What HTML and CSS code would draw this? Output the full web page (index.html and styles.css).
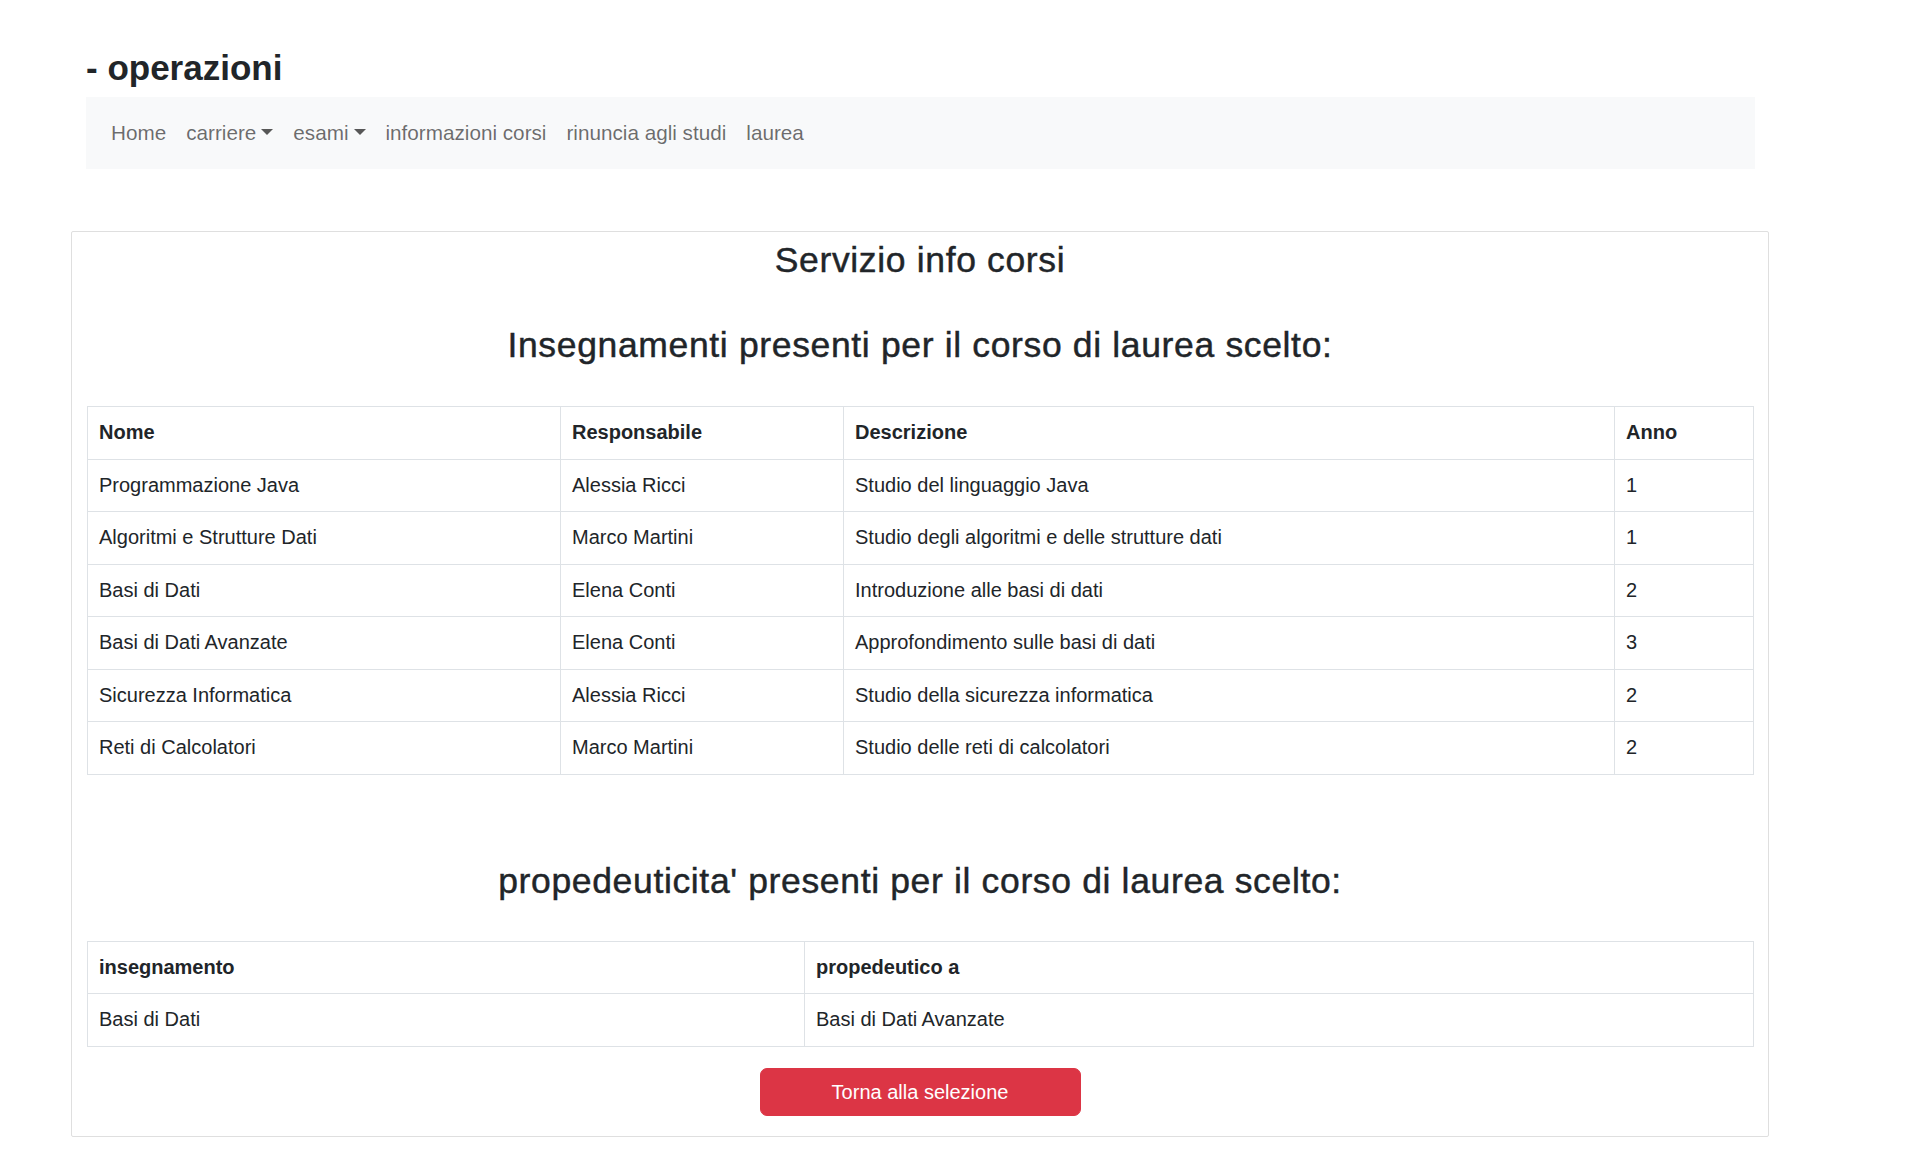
FILE: index.html
```html
<!DOCTYPE html>
<html lang="it">
<head>
<meta charset="utf-8">
<title>Servizio info corsi</title>
<link rel="stylesheet" href="styles.css">
</head>
<body>
<header class="top">
  <h3 class="page-title">- operazioni</h3>
  <nav class="navbar">
    <a class="nav-link" href="#">Home</a>
    <a class="nav-link" href="#">carriere<span class="caret"></span></a>
    <a class="nav-link" href="#">esami<span class="caret"></span></a>
    <a class="nav-link" href="#">informazioni corsi</a>
    <a class="nav-link" href="#">rinuncia agli studi</a>
    <a class="nav-link" href="#">laurea</a>
  </nav>
</header>

<main class="card">
  <h3 class="card-title">Servizio info corsi</h3>
  <h3 class="section-title">Insegnamenti presenti per il corso di laurea scelto:</h3>
  <table class="data-table courses">
    <colgroup>
      <col class="c-nome"><col class="c-resp"><col class="c-desc"><col class="c-anno">
    </colgroup>
    <thead>
      <tr><th>Nome</th><th>Responsabile</th><th>Descrizione</th><th>Anno</th></tr>
    </thead>
    <tbody>
      <tr><td>Programmazione Java</td><td>Alessia Ricci</td><td>Studio del linguaggio Java</td><td>1</td></tr>
      <tr><td>Algoritmi e Strutture Dati</td><td>Marco Martini</td><td>Studio degli algoritmi e delle strutture dati</td><td>1</td></tr>
      <tr><td>Basi di Dati</td><td>Elena Conti</td><td>Introduzione alle basi di dati</td><td>2</td></tr>
      <tr><td>Basi di Dati Avanzate</td><td>Elena Conti</td><td>Approfondimento sulle basi di dati</td><td>3</td></tr>
      <tr><td>Sicurezza Informatica</td><td>Alessia Ricci</td><td>Studio della sicurezza informatica</td><td>2</td></tr>
      <tr><td>Reti di Calcolatori</td><td>Marco Martini</td><td>Studio delle reti di calcolatori</td><td>2</td></tr>
    </tbody>
  </table>

  <h3 class="section-title spaced">propedeuticita' presenti per il corso di laurea scelto:</h3>
  <table class="data-table prereq">
    <colgroup>
      <col class="c-ins"><col class="c-prop">
    </colgroup>
    <thead>
      <tr><th>insegnamento</th><th>propedeutico a</th></tr>
    </thead>
    <tbody>
      <tr><td>Basi di Dati</td><td>Basi di Dati Avanzate</td></tr>
    </tbody>
  </table>

  <div class="actions">
    <button class="btn-danger" type="button">Torna alla selezione</button>
  </div>
</main>
</body>
</html>
```

FILE: styles.css
```css
* { box-sizing: border-box; }

html, body {
  margin: 0;
  padding: 0;
  background: #ffffff;
}

body {
  font-family: "Liberation Sans", Arial, sans-serif;
  font-size: 20px;
  line-height: 30px;
  color: #212529;
}

.top {
  width: 1669px;
  margin-left: 86px;
  padding-top: 47px;
}

.page-title {
  margin: 0 0 8px 0;
  font-size: 35px;
  line-height: 42px;
  font-weight: 700;
  color: #212529;
}

.navbar {
  display: flex;
  align-items: center;
  height: 72px;
  padding: 11px 15px;
  background: #f8f9fa;
}

.nav-link {
  display: block;
  padding: 10px 10px;
  font-size: 20.7px;
  color: rgba(0, 0, 0, 0.58);
  text-decoration: none;
  white-space: nowrap;
}

.caret {
  display: inline-block;
  width: 0;
  height: 0;
  margin-left: 5px;
  vertical-align: 5px;
  border-top: 6px solid rgba(0, 0, 0, 0.65);
  border-left: 6px solid transparent;
  border-right: 6px solid transparent;
}

.card {
  display: block;
  width: 1698px;
  margin: 62px 0 40px 71px;
  padding: 7px 15px 20px 15px;
  border: 1px solid #dfdfdf;
  border-radius: 2px;
  background: #fff;
}

.card-title,
.section-title {
  margin: 0;
  text-align: center;
  font-size: 35.5px;
  line-height: 42px;
  font-weight: 400;
  letter-spacing: 0.65px;
  -webkit-text-stroke: 0.45px #212529;
  color: #212529;
}

.section-title {
  margin-top: 43px;
  margin-bottom: 40px;
}

.section-title.spaced {
  margin-top: 85px;
  margin-bottom: 39px;
}

.data-table {
  width: 1666px;
  border-collapse: collapse;
  table-layout: fixed;
  border: 1px solid #dee2e6;
}

.data-table th,
.data-table td {
  padding: 10px 11px;
  line-height: 31.5px;
  text-align: left;
  vertical-align: top;
  border: 1px solid #dee2e6;
  color: #212529;
}

.data-table th {
  font-weight: 700;
}

.c-nome { width: 473px; }
.c-resp { width: 283px; }
.c-desc { width: 771px; }
.c-anno { width: 139px; }

.c-ins { width: 717px; }
.c-prop { width: 949px; }

.actions {
  display: flex;
  justify-content: center;
  margin-top: 21px;
}

.btn-danger {
  width: 321px;
  height: 48px;
  padding: 0;
  border: 1px solid #dc3545;
  border-radius: 7px;
  background: #dc3545;
  color: #ffffff;
  font-family: "Liberation Sans", Arial, sans-serif;
  font-size: 20px;
  line-height: 30px;
  cursor: pointer;
}
```
